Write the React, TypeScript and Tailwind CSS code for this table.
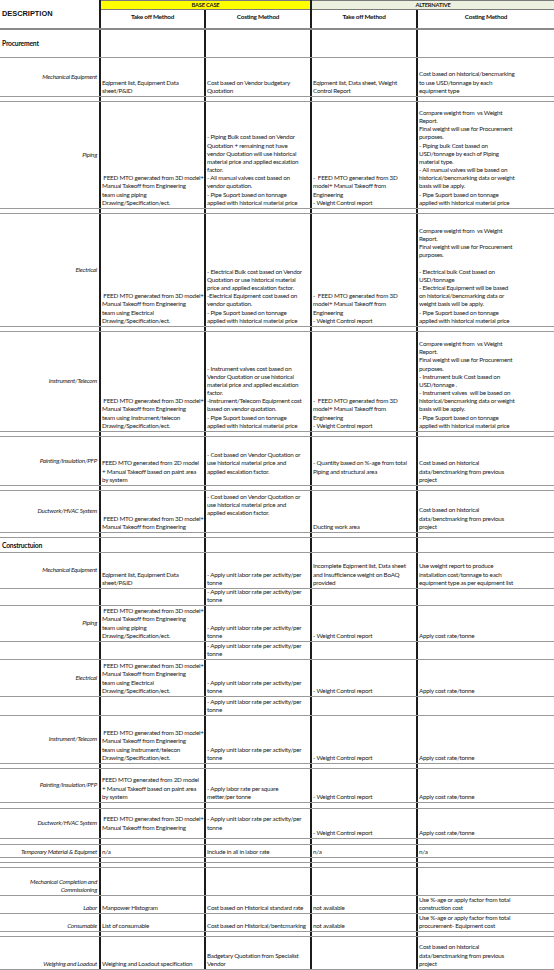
import * as React from 'react'
import clsx from 'clsx'

type V = 't' | 'c' | 'b'
interface Cell {
  t: string[]
  v?: V
}
interface Row {
  h: string
  kind?: 'sec' | 'sp'
  label?: string[]
  lv?: V
  c?: (Cell | null)[]
}

const vCls: Record<V, string> = {
  t: 'justify-start pt-[2px]',
  c: 'justify-center',
  b: 'justify-end pb-[1px]',
}

const FEED3D = [' FEED MTO generated from 3D model+', 'Manual Takeoff from Engineering']
const ALT_TO = ['-  FEED MTO generated from 3D', 'model+ Manual Takeoff from', 'Engineering', '- Weight Control report']
const APPLY = ['- Apply unit labor rate per activity/per', 'tonne']
const HIST = ['Cost based on historical', 'data/benctmarking from previous', 'project']
const WCR: Cell = { t: ['- Weight Control report'] }
const RATE: Cell = { t: ['Apply cost rate/tonne'] }
const SP: Row = { h: 'h-[5px]', kind: 'sp' }

const rows: Row[] = [
  { h: 'h-[28px]', kind: 'sec', label: ['Procurement'] },
  {
    h: 'h-[39px]',
    label: ['Mechanical Equipment'],
    c: [
      { t: ['Eqipment list, Equipment Data', 'sheet/P&ID'] },
      { t: ['Cost based on Vendor budgetary', 'Quotation'] },
      { t: ['Eqipment list, Data sheet, Weight', 'Control Report'] },
      { t: ['Cost based on historical/bencmarking', 'to use USD/tonnage by each', 'equipment type'] },
    ],
  },
  SP,
  {
    h: 'h-[107px]',
    label: ['Piping'],
    c: [
      { t: [...FEED3D, 'team using piping', 'Drawing/Specification/ect.'] },
      {
        t: [
          '- Piping Bulk cost based on Vendor',
          'Quotation + remaining not have',
          'vendor Quotation will use historical',
          'material price and applied escalation',
          'factor.',
          '- All manual valves cost based on',
          'vendor quotation.',
          '- Pipe Suport based on tonnage',
          'applied with historical material price',
        ],
      },
      { t: ALT_TO },
      {
        t: [
          'Compare weight from  vs Weight',
          'Report.',
          'Final weight will use for Procurement',
          'purposes.',
          '- Piping bulk Cost based on',
          'USD/tonnage by each of Piping',
          'material type.',
          '- All manual valves will be based on',
          'historical/bencmarking data or weight',
          'basis will be apply.',
          '- Pipe Suport based on tonnage',
          'applied with historical material price',
        ],
      },
    ],
  },
  SP,
  {
    h: 'h-[113px]',
    label: ['Electrical'],
    c: [
      { t: [...FEED3D, 'team using Electrical', 'Drawing/Specification/ect.'] },
      {
        t: [
          '- Electrical Bulk cost based on Vendor',
          'Quotation or use historical material',
          'price and applied escalation factor.',
          '-Electrical Equipment cost based on',
          'vendor quotation.',
          '- Pipe Suport based on tonnage',
          'applied with historical material price',
        ],
      },
      { t: ALT_TO },
      {
        t: [
          'Compare weight from  vs Weight',
          'Report.',
          'Final weight will use for Procurement',
          'purposes.',
          '',
          '- Electrical bulk Cost based on',
          'USD/tonnage',
          '- Electrical Equipment will be based',
          'on historical/bencmarking data or',
          'weight basis will be apply.',
          '- Pipe Suport based on tonnage',
          'applied with historical material price',
        ],
      },
    ],
  },
  SP,
  {
    h: 'h-[100px]',
    label: ['Instrument/Telecom'],
    c: [
      { t: [...FEED3D, 'team using Instrument/telecon', 'Drawing/Specification/ect.'] },
      {
        t: [
          '- Instrument valves cost based on',
          'Vendor Quotation or use historical',
          'material price and applied escalation',
          'factor.',
          '-Instrument/Telecom Equipment cost',
          'based on vendor quotation.',
          '- Pipe Suport based on tonnage',
          'applied with historical material price',
        ],
      },
      { t: ALT_TO },
      {
        t: [
          'Compare weight from  vs Weight',
          'Report.',
          'Final weight will use for Procurement',
          'purposes.',
          '- Instrument bulk Cost based on',
          'USD/tonnage .',
          '- Instrument valves  will be based on',
          'historical/bencmarking data or weight',
          'basis will be apply.',
          '- Pipe Suport based on tonnage',
          'applied with historical material price',
        ],
      },
    ],
  },
  SP,
  {
    h: 'h-[49px]',
    label: ['Painting/Insulation/PFP'],
    c: [
      { t: ['FEED MTO generated from 2D model', '+ Manual Takeoff based on paint area', 'by system'] },
      { t: ['- Cost based on Vendor Quotation or', 'use historical material price and', 'applied escalation factor.', ''] },
      { t: ['- Quantity based on %-age from total', 'Piping and structural area', ''] },
      { t: HIST },
    ],
  },
  SP,
  {
    h: 'h-[42px]',
    label: ['Ductwork/HVAC System'],
    c: [
      { t: FEED3D },
      { t: ['- Cost based on Vendor Quotation or', 'use historical material price and', 'applied escalation factor.'], v: 't' },
      { t: ['Ducting work area'] },
      { t: HIST },
    ],
  },
  SP,
  { h: 'h-[15px]', kind: 'sec', label: ['Constructuion'] },
  {
    h: 'h-[36px]',
    label: ['Mechanical Equipment'],
    c: [
      { t: ['Eqipment list, Equipment Data', 'sheet/P&ID'] },
      { t: APPLY },
      { t: ['Incomplete Eqipment list, Data sheet', 'and Insufficience weight on BoAQ', 'provided'] },
      { t: ['Use weight report to produce', 'installation cost/tonnage to each', 'equipment type as per equipment list'] },
    ],
  },
  { h: 'h-[17px]', c: [null, { t: APPLY }, null, null] },
  {
    h: 'h-[36px]',
    label: ['Piping'],
    c: [{ t: [...FEED3D, 'team using piping', 'Drawing/Specification/ect.'] }, { t: APPLY }, WCR, RATE],
  },
  { h: 'h-[18px]', c: [null, { t: APPLY }, null, null] },
  {
    h: 'h-[37px]',
    label: ['Electrical'],
    c: [{ t: [...FEED3D, 'team using Electrical', 'Drawing/Specification/ect.'] }, { t: APPLY }, WCR, RATE],
  },
  { h: 'h-[19px]', c: [null, { t: APPLY }, null, null] },
  {
    h: 'h-[48px]',
    label: ['Instrument/Telecom'],
    c: [{ t: [...FEED3D, 'team using Instrument/telecon', 'Drawing/Specification/ect.'] }, { t: APPLY }, WCR, RATE],
  },
  SP,
  {
    h: 'h-[34px]',
    label: ['Painting/Insulation/PFP'],
    c: [
      { t: ['FEED MTO generated from 2D model', '+ Manual Takeoff based on paint area', 'by system'] },
      { t: ['- Apply labor rate per square', 'metter/per tonne'] },
      WCR,
      RATE,
    ],
  },
  { h: 'h-[6px]', kind: 'sp' },
  {
    h: 'h-[30px]',
    label: ['Ductwork/HVAC System'],
    c: [{ t: FEED3D, v: 'c' }, { t: APPLY, v: 'c' }, WCR, RATE],
  },
  { h: 'h-[6px]', kind: 'sp' },
  {
    h: 'h-[13px]',
    label: ['Temporary Material & Equipmet'],
    lv: 'b',
    c: [{ t: ['n/a'] }, { t: ['Include in all in labor rate'] }, { t: ['n/a'] }, { t: ['n/a'] }],
  },
  SP,
  SP,
  { h: 'h-[28px]', label: ['Mechanical Completion and', 'Commissioning'], lv: 'b', c: [null, null, null, null] },
  {
    h: 'h-[18px]',
    label: ['Labor'],
    lv: 'b',
    c: [
      { t: ['Manpower Histogram'] },
      { t: ['Cost based on Historical standard rate'] },
      { t: ['not available'] },
      { t: ['Use %-age or apply factor from total', 'construction cost'] },
    ],
  },
  {
    h: 'h-[18px]',
    label: ['Consumable'],
    lv: 'b',
    c: [
      { t: ['List of consumable'] },
      { t: ['Cost based on Historical/bentcmarking'] },
      { t: ['not available'] },
      { t: ['Use %-age or apply factor from total', 'procurement- Equipment cost'] },
    ],
  },
  SP,
  {
    h: 'h-[33px]',
    label: ['Weighing and Loadout'],
    lv: 'b',
    c: [
      { t: ['Weighing and Loadout specification'] },
      { t: ['Badgetary Quotation from Specialist', 'Vendor'] },
      null,
      { t: HIST },
    ],
  },
]

const colW = ['w-[105px]', 'w-[106px]', 'w-[106px]', 'flex-1']
const vline = 'border-r-2 border-[#1c1c1c]'

function Lines({ cell }: { cell: Cell }): React.ReactElement {
  return (
    <div className={clsx('flex h-full flex-col overflow-hidden pl-[1px]', vCls[cell.v ?? 'b'])}>
      {cell.t.map((l, i) => (
        <div key={i} className="h-[8.2px] whitespace-pre">
          {l}
        </div>
      ))}
    </div>
  )
}

function TableRow({ row }: { row: Row }): React.ReactElement {
  const cells = row.c ?? [null, null, null, null]
  const sec = row.kind === 'sec'
  return (
    <div className={clsx('flex border-b border-[#9a9a9a]', row.h)}>
      <div
        className={clsx(
          'flex w-[101px] shrink-0 flex-col',
          vline,
          vCls[row.lv ?? 'c'],
          sec ? 'items-start pl-[2px] text-[6.8px] font-bold text-[#111]' : 'items-end pr-[2px] italic'
        )}
      >
        {row.label?.map((l, i) => (
          <div key={i} className="h-[8.2px] whitespace-nowrap">
            {l}
          </div>
        ))}
      </div>
      {cells.map((c, i) => (
        <div key={i} className={clsx('shrink-0', colW[i], i < 3 && vline)}>
          {c && <Lines cell={c} />}
        </div>
      ))}
    </div>
  )
}

function GroupHead({ title, bg, first }: { title: string; bg: string; first: string }): React.ReactElement {
  return (
    <div className="flex w-full flex-col">
      <div className={clsx('flex h-[10px] items-center justify-center border-y border-[#7a7a7a] text-[5.8px] font-bold', bg)}>
        {title}
      </div>
      <div className="flex flex-1 text-[6.4px] font-bold text-[#111]">
        <div className={clsx('shrink-0 pt-[3px] text-center', first, vline)}>Take off Method</div>
        <div className="flex-1 pt-[3px] text-center">Costing Method</div>
      </div>
    </div>
  )
}

export default function App(): React.ReactElement {
  return (
    <div className="h-[970px] w-[554px] overflow-hidden bg-white font-['Lato',sans-serif] text-[6.3px] leading-[8.2px] tracking-[-0.24px] text-[#1c1c1c]">
      <div className="flex h-[30px] border-b-2 border-[#8a8a8a]">
        <div className={clsx('flex w-[101px] shrink-0 items-center pl-[2px]', vline)}>
          <span className="font-['Liberation_Sans',sans-serif] text-[7.4px] font-bold tracking-normal text-[#111]">
            DESCRIPTION
          </span>
        </div>
        <div className={clsx('flex w-[211px] shrink-0', vline)}>
          <GroupHead title="BASE CASE" bg="bg-[#ffff00]" first="w-[105px]" />
        </div>
        <div className="flex flex-1">
          <GroupHead title="ALTERNATIVE" bg="bg-[#ebf1de]" first="w-[106px]" />
        </div>
      </div>
      {rows.map((r, i) => (
        <TableRow key={i} row={r} />
      ))}
    </div>
  )
}
